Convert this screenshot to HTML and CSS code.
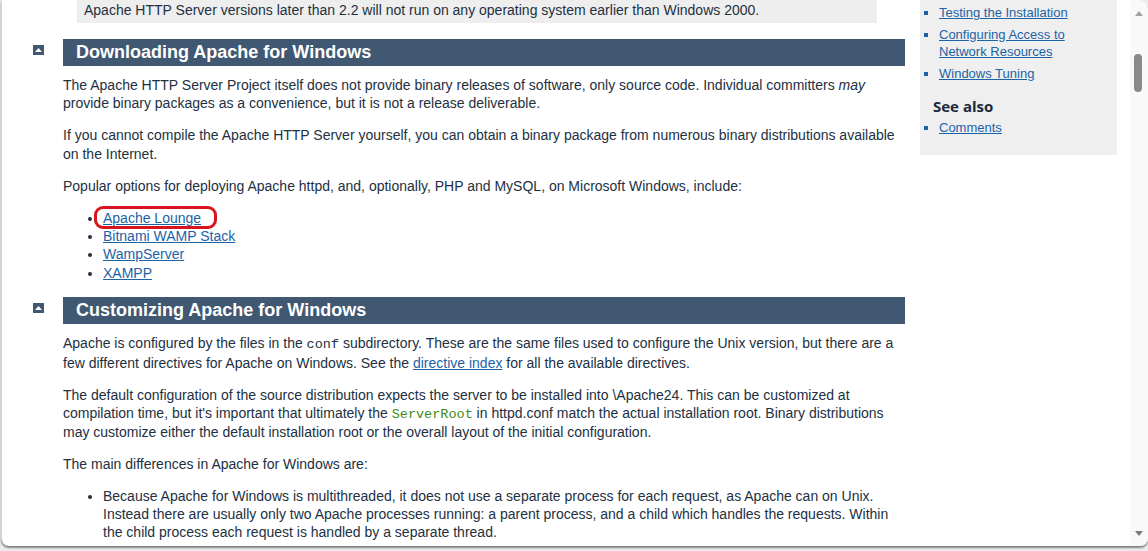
FILE: index.html
```html
<!DOCTYPE html>
<html lang="en">

<head>
    <meta charset="UTF-8">
    <meta name="viewport" content="width=device-width, initial-scale=1.0">
    <title>Using Apache HTTP Server on Microsoft Windows</title>
    <link rel="stylesheet" href="styles.css">
</head>

<body>
    <div class="window">
        <div class="viewport">
            <div class="main">
                <div class="note">Apache HTTP Server versions later than 2.2 will not run on any operating system earlier than Windows 2000.</div>

                <div class="section">
                    <a class="top-link" href="#page-header"><svg width="11" height="10" viewBox="0 0 11 10"><rect width="11" height="10" fill="#405871"/><path d="M2 7 L5.5 3 L9 7 Z" fill="#fff"/></svg></a>
                    <h2>Downloading Apache for Windows</h2>
                    <p>The Apache HTTP Server Project itself does not provide binary releases of software, only source code. Individual committers <em>may</em> provide binary packages as a convenience, but it is not a release deliverable.</p>
                    <p>If you cannot compile the Apache HTTP Server yourself, you can obtain a binary package from numerous binary distributions available on the Internet.</p>
                    <p>Popular options for deploying Apache httpd, and, optionally, PHP and MySQL, on Microsoft Windows, include:</p>
                    <ul>
                        <li><a class="marked" href="#">Apache Lounge</a></li>
                        <li><a href="#">Bitnami WAMP Stack</a></li>
                        <li><a href="#">WampServer</a></li>
                        <li><a href="#">XAMPP</a></li>
                    </ul>
                </div>

                <div class="section">
                    <a class="top-link" href="#page-header"><svg width="11" height="10" viewBox="0 0 11 10"><rect width="11" height="10" fill="#405871"/><path d="M2 7 L5.5 3 L9 7 Z" fill="#fff"/></svg></a>
                    <h2>Customizing Apache for Windows</h2>
                    <p>Apache is configured by the files in the <code>conf</code> subdirectory. These are the same files used to configure the Unix version, but there are a few different directives for Apache on Windows. See the <a href="#">directive index</a> for all the available directives.</p>
                    <p>The default configuration of the source distribution expects the server to be installed into \Apache24. This can be customized at compilation time, but it's important that ultimately the <code class="directive">ServerRoot</code> in httpd.conf match the actual installation root. Binary distributions may customize either the default installation root or the overall layout of the initial configuration.</p>
                    <p>The main differences in Apache for Windows are:</p>
                    <ul>
                        <li>Because Apache for Windows is multithreaded, it does not use a separate process for each request, as Apache can on Unix. Instead there are usually only two Apache processes running: a parent process, and a child which handles the requests. Within the child process each request is handled by a separate thread.</li>
                    </ul>
                </div>
            </div>

            <div class="sidebar">
                <ul>
                    <li><a href="#">Testing the Installation</a></li>
                    <li><a href="#">Configuring Access to Network Resources</a></li>
                    <li><a href="#">Windows Tuning</a></li>
                </ul>
                <h3>See also</h3>
                <ul>
                    <li><a href="#">Comments</a></li>
                </ul>
            </div>
        </div>

        <div class="scrollbar">
            <span class="arrow-up"></span>
            <span class="thumb"></span>
            <span class="arrow-down"></span>
        </div>
    </div>
</body>

</html>
```

FILE: styles.css
```css
html,
body {
    margin: 0;
    height: 551px;
    overflow: hidden;
}

body {
    background-color: #ececec;
    font-family: "Liberation Sans", Arial, sans-serif;
    color: #22303f;
}

/* 窗口外框 */
.window {
    display: flex;
    height: 546px;
    margin-left: 1px;
    background-color: #fff;
    border-left: 1px solid #d6d6d6;
    border-radius: 0 10px 8px 8px;
    box-shadow: 0 2px 2px rgba(0, 0, 0, 0.45);
    overflow: hidden;
}

.viewport {
    flex: 1;
    display: flex;
    align-items: flex-start;
}

.main {
    width: 872px;
    padding-left: 31px;
}

.note {
    width: 786px;
    margin-left: 44px;
    padding: 1px 7px 4px;
    background-color: #eeeeee;
    font-size: 14px;
    line-height: 18px;
}

.section {
    display: grid;
    grid-template-columns: 30px 842px;
    margin-top: 16px;
}

.section > * {
    grid-column: 2;
}

.section + .section {
    margin-top: 0;
}

.section .top-link {
    grid-column: 1;
    grid-row: 1;
    padding-top: 6px;
    line-height: 0;
}

h2 {
    margin: 0 0 10px;
    height: 27px;
    padding-left: 13px;
    background-color: #405871;
    color: #fff;
    font-size: 18px;
    line-height: 27px;
    font-weight: bold;
}

p {
    margin: 0 0 13.5px;
    font-size: 14px;
    line-height: 18.4px;
}

.main ul {
    margin: 0 0 14.5px;
    padding-left: 40px;
    font-size: 14px;
    line-height: 18.4px;
}

a {
    color: #1c63a6;
}

code {
    font-family: "Liberation Mono", "Courier New", monospace;
    font-size: 13.5px;
}

code.directive {
    color: #3f8a12;
    line-height: 1;
}

/* 红色圈注 */
.marked {
    position: relative;
}

.marked::after {
    content: "";
    position: absolute;
    left: -9px;
    top: -4px;
    width: 117px;
    height: 17px;
    border: 3px solid #d8141e;
    border-radius: 9px;
}

.sidebar {
    width: 176px;
    margin-left: 15px;
    padding: 4px 8px 14px 13px;
    background-color: #efefef;
    font-size: 13px;
    line-height: 17px;
}

.sidebar ul {
    margin: 0;
    padding-left: 6px;
    list-style: square;
}

.sidebar li {
    margin-bottom: 5px;
    color: #1c63a6;
}

.sidebar h3 {
    margin: 15px 0 3px;
    font-family: "Open Sans", sans-serif;
    font-size: 15px;
    line-height: 19px;
    font-weight: bold;
    color: #1a2a3c;
}

/* 滚动条 */
.scrollbar {
    position: relative;
    width: 18px;
    background-color: #f9f9f9;
}

.arrow-up,
.arrow-down {
    position: absolute;
    left: 5px;
    width: 0;
    height: 0;
    border-left: 4px solid transparent;
    border-right: 4px solid transparent;
}

.arrow-up {
    top: 11px;
    border-bottom: 5px solid #a3a3a3;
}

.arrow-down {
    bottom: 10px;
    border-top: 5px solid #7a7a7a;
}

.thumb {
    position: absolute;
    left: 4px;
    top: 54px;
    width: 8px;
    height: 38px;
    border-radius: 4px;
    background-color: #8a8a8a;
}
```
